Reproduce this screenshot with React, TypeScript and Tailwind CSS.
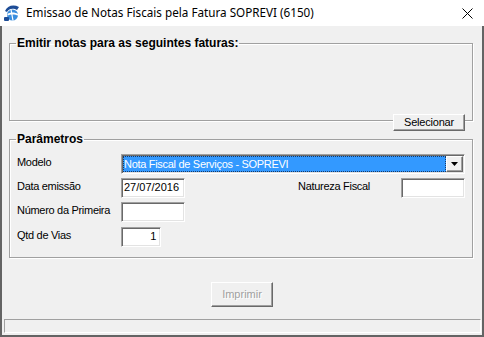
import React from "react";

// classic win32 3D borders
const RAISED =
  "border border-t-white border-l-white border-r-[#696969] border-b-[#696969] shadow-[inset_-1px_-1px_0_#a0a0a0] bg-[#f0f0f0]";
const SUNKEN =
  "border border-t-[#a0a0a0] border-l-[#a0a0a0] border-r-white border-b-white shadow-[inset_1px_1px_0_#696969,inset_-1px_-1px_0_#e3e3e3] bg-white";
const GROUP =
  "border border-[#a0a0a0] shadow-[inset_1px_1px_0_#fff,1px_1px_0_#fff]";

const AppIcon = () => (
  <svg width="16" height="16" viewBox="0 0 16 16">
    <path d="M1 6 C3 1 9 -1 15 2 L13 5 C10 3 5 3 3 7 Z" fill="#1d4c96" />
    <circle cx="8.5" cy="10" r="5.5" fill="#3a8ede" />
    <path d="M3.5 9 C6 7 11 7 14 9 L14 10.5 C11 9 6 9 3.5 10.5 Z" fill="#fff" />
    <path d="M7 4.5 L9 15.5" stroke="#fff" strokeWidth="1.2" />
    <rect x="0" y="12" width="5" height="4" rx="1" fill="#1d4c96" />
  </svg>
);

const Label = ({ children }: { children: React.ReactNode }) => (
  <span className="w-[104px] shrink-0 leading-[14px] pt-[1px]">{children}</span>
);

export default function App() {
  return (
    <div className="w-[484px] h-[337px] flex flex-col bg-white text-[11px] text-black font-['Liberation_Sans',Arial,sans-serif]">
      {/* title bar */}
      <div className="h-[26px] shrink-0 flex items-center">
        <div className="ml-[4px] w-[16px] h-[16px]">
          <AppIcon />
        </div>
        <span className="ml-[6px] text-[11.7px] font-['Noto_Sans',sans-serif] text-black">
          Emissao de Notas Fiscais pela Fatura SOPREVI (6150)
        </span>
        <svg className="ml-auto mr-[11px]" width="11" height="11" viewBox="0 0 11 11">
          <path d="M0.5 0.5 L10.5 10.5 M10.5 0.5 L0.5 10.5" stroke="#000" strokeWidth="1" />
        </svg>
      </div>

      {/* body */}
      <div className="flex-1 flex flex-col bg-[#f0f0f0] border-x-2 border-b-2 border-[#646464]">
        <fieldset className={`ml-[7px] mr-[9px] mt-[10px] h-[85px] ${GROUP}`}>
          <legend className="ml-[6px] px-[1px] font-bold text-[12px] leading-[14px]">
            Emitir notas para as seguintes faturas:
          </legend>
        </fieldset>

        <div className="flex justify-end mr-[17px] -mt-[7px]">
          <button className={`w-[72px] h-[17px] leading-[13px] tracking-[-0.2px] ${RAISED}`}>Selecionar</button>
        </div>

        <fieldset className={`ml-[7px] mr-[9px] mt-[1px] h-[126px] px-[7px] pt-[8px] tracking-[-0.3px] ${GROUP}`}>
          <legend className="-ml-[1px] px-[1px] font-bold text-[12px] tracking-normal leading-[14px]">Parâmetros</legend>

          <div className="flex items-start">
            <Label>Modelo</Label>
            <div className={`w-[344px] h-[20px] flex p-[1px] ${SUNKEN}`}>
              <div className="flex-1 bg-[#3399ff] border border-dotted border-[#1a3a66] text-white leading-[14px]">
                Nota Fiscal de Serviços - SOPREVI
              </div>
              <div className={`w-[17px] flex items-center justify-center ${RAISED}`}>
                <svg width="7" height="4" viewBox="0 0 7 4">
                  <path d="M0 0 H7 L3.5 4 Z" fill="#000" />
                </svg>
              </div>
            </div>
          </div>

          <div className="flex items-start mt-[4px]">
            <Label>Data emissão</Label>
            <div className={`w-[64px] h-[20px] pl-[2px] leading-[16px] tracking-normal ${SUNKEN}`}>27/07/2016</div>
            <span className="ml-auto mr-[31px] leading-[14px] pt-[1px]">Natureza Fiscal</span>
            <div className={`w-[64px] h-[20px] ${SUNKEN}`} />
          </div>

          <div className="flex items-start mt-[4px]">
            <Label>Número da Primeira</Label>
            <div className={`w-[64px] h-[20px] ${SUNKEN}`} />
          </div>

          <div className="flex items-start mt-[5px]">
            <Label>Qtd de Vias</Label>
            <div className={`w-[40px] h-[20px] pr-[4px] text-right leading-[16px] ${SUNKEN}`}>1</div>
          </div>
        </fieldset>

        <div className="flex justify-center mt-[24px]">
          <button
            disabled
            className={`w-[62px] h-[25px] text-[#a0a0a0] [text-shadow:1px_1px_0_#fff] ${RAISED}`}
          >
            Imprimir
          </button>
        </div>

        <div className="mt-[12px] ml-[2px] mr-[1px] h-[14px] border border-t-[#a0a0a0] border-l-[#a0a0a0] border-r-white border-b-white" />
      </div>
    </div>
  );
}
